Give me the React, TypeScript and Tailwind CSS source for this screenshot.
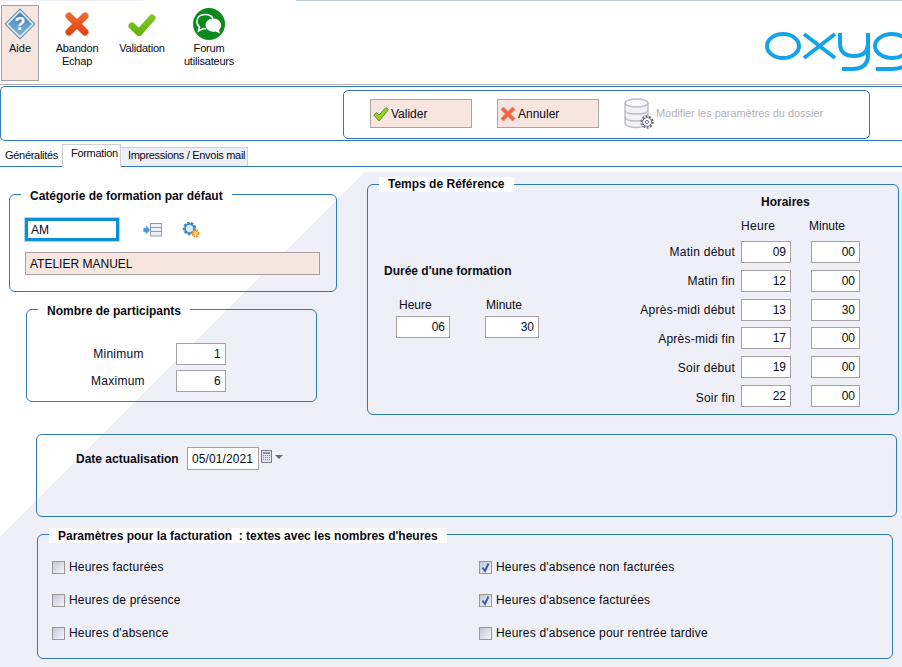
import type { ReactNode } from 'react'

function Legend({ children, className = 'top-[-8px] leading-[15px]' }: { children: ReactNode; className?: string }) {
  return (
    <span className={`absolute left-[11px] h-[15px] bg-white px-[9px] text-[12px] font-bold whitespace-pre text-[#0a0a14] ${className}`}>
      {children}
    </span>
  )
}

function Field({ value, className = 'w-[50px]' }: { value: string; className?: string }) {
  return (
    <input
      readOnly
      value={value}
      className={`h-[22px] shrink-0 border border-[#a79fa6] bg-white pr-[4px] text-right text-[12px] text-[#0a0a14] outline-none ${className}`}
    />
  )
}

function Check({ label, checked = false }: { label: string; checked?: boolean }) {
  return (
    <label className="flex h-[16px] items-center text-[12px] tracking-[0.2px] text-[#0a0a14]">
      <span className="flex h-[13px] w-[13px] items-center justify-center border border-[#9b9794] bg-[linear-gradient(135deg,#c3c7d6,#f7f7fb)]">
        {checked && (
          <svg width="11" height="11" viewBox="0 0 11 11">
            <path d="M2.5 5.5 L5 9 L8.5 1.5" fill="none" stroke="#3f5f9e" strokeWidth="2" />
          </svg>
        )}
      </span>
      <span className="ml-[4px]">{label}</span>
    </label>
  )
}

function HelpIcon() {
  return (
    <svg width="32" height="32" viewBox="0 0 32 32">
      <defs>
        <linearGradient id="helpFill" x1="0" y1="0" x2="0" y2="1">
          <stop offset="0" stopColor="#3e7fb6" />
          <stop offset="1" stopColor="#86b6dd" />
        </linearGradient>
      </defs>
      <path d="M16 .8 L31.2 16 L16 31.2 L.8 16 Z" fill="#5b8fb9" stroke="#5b8fb9" strokeWidth="1" strokeLinejoin="round" />
      <path d="M16 3 L29 16 L16 29 L3 16 Z" fill="url(#helpFill)" stroke="#e8f1f8" strokeWidth="1.6" strokeLinejoin="round" />
      <text x="16" y="22" textAnchor="middle" fontSize="18" fontWeight="700" fill="#fff" fontFamily="Liberation Sans, sans-serif">?</text>
    </svg>
  )
}

function CrossIcon() {
  return (
    <svg width="24" height="24" viewBox="0 0 24 24">
      <defs>
        <linearGradient id="crossFill" gradientUnits="userSpaceOnUse" x1="0" y1="0" x2="0" y2="24">
          <stop offset="0" stopColor="#f0703a" />
          <stop offset="1" stopColor="#e53c0c" />
        </linearGradient>
      </defs>
      <path d="M4 4 L20 20 M20 4 L4 20" fill="none" stroke="url(#crossFill)" strokeWidth="7" strokeLinecap="round" />
    </svg>
  )
}

function TickIcon() {
  return (
    <svg width="28" height="24" viewBox="0 0 28 24">
      <defs>
        <linearGradient id="tickFill" gradientUnits="userSpaceOnUse" x1="0" y1="0" x2="0" y2="24">
          <stop offset="0" stopColor="#8ccb2a" />
          <stop offset="1" stopColor="#62ad08" />
        </linearGradient>
      </defs>
      <path d="M4 13 L11 19.5 L24 5" fill="none" stroke="url(#tickFill)" strokeWidth="7" strokeLinecap="round" strokeLinejoin="round" />
    </svg>
  )
}

function ForumIcon() {
  return (
    <svg width="32" height="32" viewBox="0 0 32 32">
      <circle cx="16" cy="16" r="16" fill="#0c8a1e" />
      <path d="M12 6.5 C6.5 6.5 4 10 4 13.5 C4 16 5 18 6.5 19 L5.5 23 L10 20.5 C11 20.8 12 20.8 13 20.8" fill="none" stroke="#fff" strokeWidth="1.6" />
      <path d="M12 6.5 C16 6.5 19 8 20 10.5" fill="none" stroke="#fff" strokeWidth="1.6" />
      <path d="M20 10.5 C25 10.5 28 13.5 28 17 C28 19.5 27 21 26 22 L27 25.5 L22.5 23.5 C17 24.5 12.5 21.5 12.5 17 C12.5 13.5 16 10.5 20 10.5 Z" fill="#fff" />
    </svg>
  )
}

function Logo() {
  return (
    <svg width="137" height="44" viewBox="1 0 137 44" className="shrink-0" fill="none" stroke="#12a3e8" strokeWidth="4">
      <ellipse cx="19" cy="18" rx="16" ry="12" />
      <path d="M40 6 L71 30 M71 6 L40 30" />
      <path d="M76 5 V15 Q76 28 90 28 Q104 28 104 15 V5 M104 15 V27 Q104 41 88 41 H78" />
      <ellipse cx="128" cy="18" rx="17" ry="12" />
      <path d="M145 5 V28 Q145 41 128 41 H112" />
    </svg>
  )
}

function SmallTick() {
  return (
    <svg width="18" height="18" viewBox="0 0 18 18">
      <path d="M1.8 10 L4.5 7.5 L7 10 L14 2.5 L16.5 4.5 L7.2 16 Z" fill="#8fd32b" stroke="#5d8a2a" strokeWidth="1" strokeLinejoin="round" />
    </svg>
  )
}

function SmallCross() {
  return (
    <svg width="16" height="16" viewBox="0 0 16 16">
      <path d="M3.5 1 L8 5.5 L12.5 1 L15 3.5 L10.5 8 L15 12.5 L12.5 15 L8 10.5 L3.5 15 L1 12.5 L5.5 8 L1 3.5 Z" fill="#f2613c" stroke="#e98a73" strokeWidth="1" strokeLinejoin="round" />
    </svg>
  )
}

function DatabaseIcon() {
  return (
    <svg width="30" height="31" viewBox="0 0 30 31" fill="#fff" stroke="#bdbcc6" strokeWidth="1.4">
      <path d="M1 5 V25 C1 28 7 29.5 12 29.5 C18 29.5 24 28 24 25 V5" fill="#f3f3f7" />
      <ellipse cx="12.5" cy="5" rx="11.5" ry="4" fill="#fafafc" />
      <path d="M1 12 C1 15 7 16 12.5 16 C18 16 24 15 24 12 M1 19 C1 22 7 23 12.5 23 C18 23 24 22 24 19" fill="none" />
      <circle cx="23" cy="24" r="5.5" fill="#fff" stroke="#77778c" strokeWidth="2.4" strokeDasharray="2 1.4" />
      <circle cx="23" cy="24" r="4.4" fill="#fff" stroke="#77778c" strokeWidth="1" />
      <circle cx="23" cy="24" r="1.6" fill="none" stroke="#77778c" strokeWidth="1" />
    </svg>
  )
}

function ListIcon() {
  return (
    <svg width="19" height="14" viewBox="0 0 19 14">
      <path d="M0.5 5 H3 V2.5 L7 7 L3 11.5 V9 H0.5 Z" fill="#3f97d8" stroke="#8dc2ea" strokeWidth="0.6" />
      <rect x="7.5" y="0.5" width="11" height="12.5" fill="#eef0f7" stroke="#9a97ad" />
      <path d="M8 4.5 H18 M8 8.5 H18" stroke="#9a97ad" />
    </svg>
  )
}

function GearsIcon() {
  return (
    <svg width="18" height="17" viewBox="0 0 18 17">
      <circle cx="7.5" cy="7.5" r="5.2" fill="#dcebf8" stroke="#3f8ac9" strokeWidth="3" strokeDasharray="2.4 1.2" />
      <circle cx="7.5" cy="7.5" r="4.6" fill="none" stroke="#3f8ac9" strokeWidth="1.6" />
      <circle cx="13.5" cy="12.5" r="3" fill="#ffd27a" stroke="#e8951c" strokeWidth="2" strokeDasharray="1.6 0.8" />
    </svg>
  )
}

function CalendarIcon() {
  return (
    <svg width="11" height="13" viewBox="0 0 11 13">
      <rect x="0.5" y="0.5" width="10" height="12" fill="#dfe0e8" stroke="#7f7f8a" />
      <path d="M2 3 H9" stroke="#77778a" strokeWidth="1.5" />
      <path d="M2 5.5 H9 M2 7.5 H9 M2 9.5 H9" stroke="#8c8c9a" strokeDasharray="1 1" />
    </svg>
  )
}

const TOOLS = [
  { lines: ['Abandon', 'Echap'], icon: <CrossIcon />, margin: 'ml-[8px]', iconPad: 'pt-[11px]' },
  { lines: ['Validation'], icon: <TickIcon />, margin: 'ml-[5px]', iconPad: 'pt-[12px]' },
  { lines: ['Forum', 'utilisateurs'], icon: <ForumIcon />, margin: 'ml-[7px]', iconPad: 'pt-[7px]' },
]

// nudge: the labels sit a little under their inputs on the last rows
const HOURS = [
  { label: 'Matin début', h: '09', m: '00', nudge: '' },
  { label: 'Matin fin', h: '12', m: '00', nudge: '' },
  { label: 'Après-midi début', h: '13', m: '30', nudge: '' },
  { label: 'Après-midi fin', h: '17', m: '00', nudge: 'pt-[2px]' },
  { label: 'Soir début', h: '19', m: '00', nudge: 'pt-[2px]' },
  { label: 'Soir fin', h: '22', m: '00', nudge: 'pt-[4px]' },
]

export default function App() {
  return (
    <div className="flex h-[667px] w-[902px] flex-col overflow-hidden bg-white font-['Liberation_Sans',Arial,sans-serif] text-[#0a0a14]">
      {/* top edge */}
      <div className="flex h-px shrink-0">
        <div className="w-[143px] bg-[#eeeff7]" />
        <div className="w-[153px]" />
        <div className="flex-1 bg-[#bfd0dc]" />
      </div>

      {/* toolbar */}
      <div className="flex h-[84px] shrink-0 items-start border-b border-[#b3adb3]">
        <button className="ml-px mt-[4px] flex h-[76px] w-[38px] flex-col items-center border border-[#a79fa6] bg-[#f6e6df] pt-[2px] text-[11px] leading-[13px]">
          <HelpIcon />
          <span className="mt-[2px]">Aide</span>
        </button>
        {TOOLS.map(t => (
          <div key={t.lines[0]} className={`flex h-[76px] w-[60px] flex-col items-center text-center text-[11px] leading-[13px] tracking-[-0.2px] ${t.margin}`}>
            <div className={`flex h-[41px] shrink-0 items-start ${t.iconPad}`}>{t.icon}</div>
            {t.lines.map(l => <span key={l}>{l}</span>)}
          </div>
        ))}
        <div className="ml-auto mr-0 flex h-full w-[137px] overflow-hidden pt-[27px]">
          <Logo />
        </div>
      </div>

      {/* action bar */}
      <div className="mt-px flex h-[55px] shrink-0 items-start rounded-l-[5px] border-y border-l border-[#2f7ab8] pl-[342px] pt-[3px]">
        <div className="flex h-[49px] w-[527px] items-center rounded-[5px] border border-[#2f7ab8] pb-[2px] pl-[26px]">
          <button className="flex h-[29px] w-[102px] items-center border border-[#aca59f] bg-[#f6e6df] pl-px text-[12px]">
            <SmallTick />
            <span className="ml-px">Valider</span>
          </button>
          <button className="ml-[25px] flex h-[29px] w-[102px] items-center border border-[#aca59f] bg-[#f6e6df] pl-[2px] text-[12px]">
            <SmallCross />
            <span className="ml-[2px]">Annuler</span>
          </button>
          <div className="ml-[25px] flex items-center text-[11px] tracking-[-0.05px] text-[#b5b0b8]">
            <DatabaseIcon />
            <span className="ml-[2px]">Modifier les paramètres du dossier</span>
          </div>
        </div>
      </div>

      {/* tabs */}
      <div className="mt-[3px] flex h-[23px] shrink-0 items-end border-b border-[#2f7ab8] text-[11px] tracking-[-0.3px] whitespace-nowrap">
        <div className="flex h-[19px] w-[62px] items-center pb-[2px] pl-[5px]">Généralités</div>
        <div className="-mb-px flex h-[23px] w-[59px] items-start border border-b-0 border-[#cfcfd6] bg-white pl-[8px]">Formation</div>
        <div className="flex h-[19px] w-[127px] items-center border-r border-t border-[#cfcfd6] bg-[#eeeff7] pb-[3px] pl-[7px]">Impressions / Envois mail</div>
      </div>

      {/* form */}
      <div className="mt-[5px] flex-1 bg-[linear-gradient(135deg,#fff_258px,#eeeff7_258px)] text-[12px]">
        <div className="flex items-start">
          <div className="ml-[9px] mt-[22px] w-[328px]">
            <div className="relative h-[98px] rounded-[6px] border border-[#2f7ab8] pl-[15px] pt-[23px]">
              <Legend className="top-[-6px] leading-[15px]">Catégorie de formation par défaut</Legend>
              <div className="flex items-center">
                <input
                  readOnly
                  value="AM"
                  className="h-[23px] w-[94px] border-[3px] border-[#0d8fd6] bg-white pl-[3px] text-[12px] outline outline-1 outline-[#a9d8f2]"
                />
                <span className="ml-[24px] flex"><ListIcon /></span>
                <span className="ml-[20px] flex"><GearsIcon /></span>
              </div>
              <div className="mt-[11px] flex h-[23px] w-[295px] items-center border border-[#a79fa6] bg-[#f6e6df] pl-[4px]">ATELIER MANUEL</div>
            </div>

            <div className="relative ml-[17px] mt-[17px] h-[93px] w-[291px] rounded-[6px] border border-[#2f7ab8] pt-[33px] tracking-[0.25px]">
              <Legend className="top-[-6px] leading-[15px] tracking-normal">Nombre de participants</Legend>
              <div className="flex items-center">
                <span className="ml-[34px] w-[115px] text-center">Minimum</span>
                <Field value="1" />
              </div>
              <div className="mt-[5px] flex items-center">
                <span className="ml-[33px] w-[116px] text-center">Maximum</span>
                <Field value="6" />
              </div>
            </div>
          </div>

          <div className="relative ml-[30px] mt-[12px] flex h-[231px] w-[532px] items-start rounded-[6px] border border-[#2f7ab8]">
            <Legend>Temps de Référence</Legend>
            <div className="pl-[16px] pt-[79px]">
              <div className="h-[15px] leading-[15px] font-bold">Durée d'une formation</div>
              <div className="ml-[12px] mt-[19px] grid grid-cols-[54px_54px] gap-x-[35px] gap-y-[3px]">
                <span className="h-[15px] pl-[3px] leading-[15px]">Heure</span>
                <span className="h-[15px] pl-px leading-[15px]">Minute</span>
                <Field value="06" className="w-[54px]" />
                <Field value="30" className="w-[54px]" />
              </div>
            </div>

            <div className="ml-auto mr-[38px] w-[240px] pt-[10px]">
              <div className="h-[15px] pl-[141px] leading-[15px] font-bold">Horaires</div>
              <div className="mt-[9px] flex h-[15px] pl-[121px] leading-[15px]">
                <span className="w-[68px] tracking-[0.3px]">Heure</span>
                <span>Minute</span>
              </div>
              <div className="mt-[-7px]">
                {HOURS.map((r, i) => (
                  <div key={r.label} className={`flex items-center ${i === 3 ? 'mt-[6px]' : 'mt-[7px]'} ${i === 0 ? 'pt-[7px]' : ''}`}>
                    <span className={`w-[115px] text-right tracking-[0.25px] ${r.nudge}`}>{r.label}</span>
                    <Field value={r.h} className="ml-[6px] w-[50px]" />
                    <Field value={r.m} className="ml-[20px] w-[49px]" />
                  </div>
                ))}
              </div>
            </div>
          </div>
        </div>

        <div className="relative ml-[36px] mt-[19px] flex h-[83px] w-[861px] items-start rounded-[6px] border border-[#2f7ab8] pl-[39px] pt-[12px]">
          <span className="flex h-[23px] w-[101px] items-center font-bold whitespace-nowrap">Date actualisation</span>
          <input
            readOnly
            value="05/01/2021"
            className="ml-[10px] h-[23px] w-[72px] border border-[#a79fa6] bg-white pl-[4px] text-[12px] tracking-[0.1px] outline-none"
          />
          <span className="ml-[2px] mt-[3px] flex"><CalendarIcon /></span>
          <span className="ml-[3px] mt-[8px] h-0 w-0 border-x-[4px] border-t-[4px] border-x-transparent border-t-[#5f6b80]" />
        </div>

        <div className="relative ml-[37px] mt-[17px] flex h-[125px] w-[856px] rounded-[6px] border border-[#2f7ab8] pl-[14px] pt-[24px]">
          <Legend className="top-[-7px] leading-[17px]">Paramètres pour la facturation  : textes avec les nombres d'heures</Legend>
          <div className="flex w-[427px] flex-col gap-[17px]">
            <Check label="Heures facturées" />
            <Check label="Heures de présence" />
            <Check label="Heures d'absence" />
          </div>
          <div className="flex flex-col gap-[17px]">
            <Check label="Heures d'absence non facturées" checked />
            <Check label="Heures d'absence facturées" checked />
            <Check label="Heures d'absence pour rentrée tardive" />
          </div>
        </div>
      </div>
    </div>
  )
}
